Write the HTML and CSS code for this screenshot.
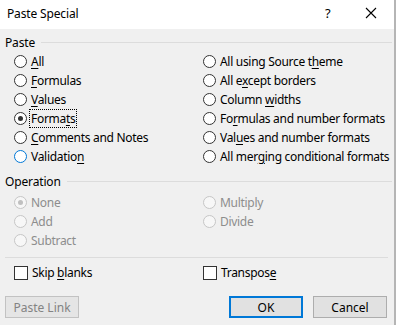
FILE: index.html
```html
<!DOCTYPE html>
<html lang="en">

<head>
    <meta charset="UTF-8">
    <title>Paste Special</title>
    <link rel="stylesheet" href="styles.css">
</head>

<body>
    <div class="dialog">
        <div class="titlebar">
            <span class="title">Paste Special</span>
            <span class="help">?</span>
            <svg class="close" width="12" height="12" viewBox="0 0 12 12">
                <path d="M1 1L11 11M11 1L1 11" stroke="#000" stroke-width="1.1" fill="none" />
            </svg>
        </div>

        <div class="content">
            <!-- paste options -->
            <div class="group-label"><span>Paste</span></div>
            <div class="options">
                <label class="opt"><span class="radio"></span><span><u>A</u>ll</span></label>
                <label class="opt"><span class="radio"></span><span>All using Source t<u>h</u>eme</span></label>
                <label class="opt"><span class="radio"></span><span><u>F</u>ormulas</span></label>
                <label class="opt"><span class="radio"></span><span>All e<u>x</u>cept borders</span></label>
                <label class="opt"><span class="radio"></span><span><u>V</u>alues</span></label>
                <label class="opt"><span class="radio"></span><span>Column <u>w</u>idths</span></label>
                <label class="opt"><span class="radio checked"></span><span class="focus">Forma<u>t</u>s</span></label>
                <label class="opt"><span class="radio"></span><span>Fo<u>r</u>mulas and number formats</span></label>
                <label class="opt"><span class="radio"></span><span><u>C</u>omments and Notes</span></label>
                <label class="opt"><span class="radio"></span><span>Val<u>u</u>es and number formats</span></label>
                <label class="opt"><span class="radio hover"></span><span>Validatio<u>n</u></span></label>
                <label class="opt"><span class="radio"></span><span>All mer<u>g</u>ing conditional formats</span></label>
            </div>

            <!-- operation options -->
            <div class="group-label op-label"><span>Operation</span></div>
            <div class="options disabled">
                <label class="opt"><span class="radio checked"></span><span>None</span></label>
                <label class="opt"><span class="radio"></span><span>Multiply</span></label>
                <label class="opt"><span class="radio"></span><span>Add</span></label>
                <label class="opt"><span class="radio"></span><span>Divide</span></label>
                <label class="opt"><span class="radio"></span><span>Subtract</span></label>
            </div>

            <div class="separator"></div>

            <div class="options checks">
                <label class="opt"><span class="check"></span><span>Skip <u>b</u>lanks</span></label>
                <label class="opt"><span class="check"></span><span>Transpos<u>e</u></span></label>
            </div>

            <div class="buttons">
                <button class="btn" disabled>Paste Link</button>
                <span class="spacer"></span>
                <button class="btn default">OK</button>
                <button class="btn">Cancel</button>
            </div>
        </div>
    </div>
</body>

</html>
```

FILE: styles.css
```css
body {
    margin: 0;
    background: #f0f0f0;
    font-family: "Noto Sans", "Segoe UI", sans-serif;
    font-size: 12px;
    letter-spacing: -0.15px;
    color: #000;
}

.dialog {
    width: 394px;
    height: 325px;
    border-right: 2px solid #b5b5b5;
    background: #f0f0f0;
}

.titlebar {
    height: 29px;
    background: #fff;
    display: flex;
    align-items: center;
    padding-left: 7px;
}

.title {
    flex: 1;
    font-size: 12px;
    margin-top: -3px;
}

.help {
    width: 40px;
    font-size: 13px;
    margin-top: -3px;
}

.close {
    margin-right: 17px;
    margin-top: -3px;
}

.content {
    padding: 5px 2px 0 5px;
}

.group-label {
    display: flex;
    align-items: center;
    height: 16px;
}

.group-label span {
    padding-right: 6px;
}

.group-label::after {
    content: "";
    flex: 1;
    border-top: 1px solid #dcdcdc;
}

.options {
    display: grid;
    grid-template-columns: 189px 1fr;
    padding-left: 9px;
    margin-top: 2px;
}

.opt {
    display: flex;
    align-items: center;
    height: 19px;
    gap: 4px;
    white-space: nowrap;
    letter-spacing: -0.3px;
}

.radio {
    width: 11px;
    height: 11px;
    border: 1px solid #333;
    border-radius: 50%;
    background: #fff;
    position: relative;
    flex: none;
}

.radio.checked::after {
    content: "";
    position: absolute;
    left: 3px;
    top: 3px;
    width: 5px;
    height: 5px;
    border-radius: 50%;
    background: #333;
}

.radio.hover {
    border-color: #0078d7;
}

.focus {
    outline: 1px dotted #000;
    outline-offset: 0;
    padding: 0 1px;
    margin-left: -1px;
}

u {
    text-decoration-thickness: 1px;
    text-underline-offset: 2px;
}

.op-label {
    margin-top: 7px;
}

.disabled {
    color: #8d8d8d;
    margin-top: 4px;
}

.disabled .radio {
    border-color: #c6c6c6;
    background: #f7f7f7;
}

.disabled .radio.checked::after {
    background: #c0c0c0;
}

.separator {
    border-top: 1px solid #dcdcdc;
    margin: 7px 4px 5px 0;
}

.check {
    width: 12px;
    height: 12px;
    border: 1px solid #333;
    background: #fff;
    flex: none;
}

.buttons {
    display: flex;
    gap: 10px;
    margin-top: 14px;
    padding-right: 5px;
}

.spacer {
    flex: 1;
}

.btn {
    width: 74px;
    height: 22px;
    font-family: inherit;
    font-size: 12px;
    background: #e1e1e1;
    border: 1px solid #adadad;
    padding: 0;
    color: #000;
}

.btn.default {
    border: 2px solid #0078d7;
}

.btn:disabled {
    background: #e5e5e5;
    border-color: #c2c2c2;
    color: #838383;
}
```
